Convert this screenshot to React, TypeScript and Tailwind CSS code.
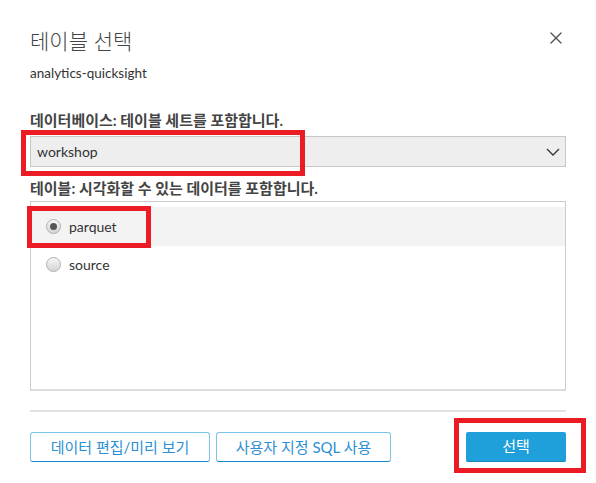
import { X } from 'lucide-react'

const font = { fontFamily: 'Lato, "Noto Sans CJK KR", sans-serif' }

function RedBox({ className }: { className: string }) {
  return <div className={`absolute border-[5px] border-[#ec1c24] pointer-events-none ${className}`} />
}

function Radio({ checked }: { checked?: boolean }) {
  return (
    <span className="w-[15px] h-[15px] rounded-full border border-[#b0b0b0] bg-gradient-to-b from-[#f6f6f6] to-[#d4d4d4] flex items-center justify-center">
      {checked && <span className="w-[7px] h-[7px] rounded-full bg-[#555]" />}
    </span>
  )
}

export default function App() {
  return (
    <div className="w-[596px] h-[483px] bg-white px-[30px] pt-[27px] text-[#333]" style={font}>
      {/* Header */}
      <div className="flex items-start justify-between">
        <h1 className="text-[21px] leading-[28px] font-light text-[#444]">테이블 선택</h1>
        <X size={20} strokeWidth={1.6} className="mt-[1px] text-[#555]" />
      </div>
      <div className="text-[13.5px] leading-[18px] mt-[9px] text-[#333]">analytics-quicksight</div>

      {/* Database */}
      <div className="text-[15px] leading-[18px] font-bold text-[#444] mt-[29px]">
        데이터베이스: 테이블 세트를 포함합니다.
      </div>
      <div className="relative mt-[7px]">
        <div className="h-[31px] flex items-center justify-between bg-[#eeeeee] border border-[#c8c8c8] pl-[6px] pr-[5px] text-[14px]">
          <span>workshop</span>
          <svg width="14" height="8" viewBox="0 0 14 8" fill="none">
            <path d="M1 1l6 6 6-6" stroke="#333" strokeWidth="1.3" />
          </svg>
        </div>
        <RedBox className="left-[-9px] top-[-6px] w-[284px] h-[46px]" />
      </div>

      {/* Tables */}
      <div className="text-[15px] leading-[18px] font-bold text-[#444] mt-[12px]">
        테이블: 시각화할 수 있는 데이터를 포함합니다.
      </div>
      <div className="mt-[4px] h-[190px] border border-[#cccccc] border-b-2 border-b-[#dcdcdc] pt-[5px]">
        <div className="relative h-[39px] bg-[#f3f3f3] flex items-center gap-[8px] pl-[15px] text-[14px]">
          <Radio checked />
          <span>parquet</span>
          <RedBox className="left-[-4px] top-[-1px] w-[124px] h-[42px]" />
        </div>
        <div className="h-[37px] flex items-center gap-[8px] pl-[15px] text-[14px]">
          <Radio />
          <span>source</span>
        </div>
      </div>

      <div className="mt-[19px] h-[2px] bg-[#e2e2e2]" />

      {/* Footer buttons */}
      <div className="mt-[20px] flex items-center justify-between">
        <div className="flex gap-[6px]">
          <button className="w-[180px] h-[30px] rounded-[3px] border border-[#7cc3e9] border-b-[#0e8ad0] text-[15px] text-[#2d8fd3] bg-white">
            데이터 편집/미리 보기
          </button>
          <button className="w-[175px] h-[30px] rounded-[3px] border border-[#7cc3e9] border-b-[#0e8ad0] text-[15px] text-[#2d8fd3] bg-white">
            사용자 지정 SQL 사용
          </button>
        </div>
        <div className="relative">
          <button className="w-[100px] h-[30px] rounded-[2px] bg-[#20a0da] border-b border-[#1689c2] text-[15px] text-white">
            선택
          </button>
          <RedBox className="left-[-12px] top-[-14px] w-[132px] h-[55px]" />
        </div>
      </div>
    </div>
  )
}
